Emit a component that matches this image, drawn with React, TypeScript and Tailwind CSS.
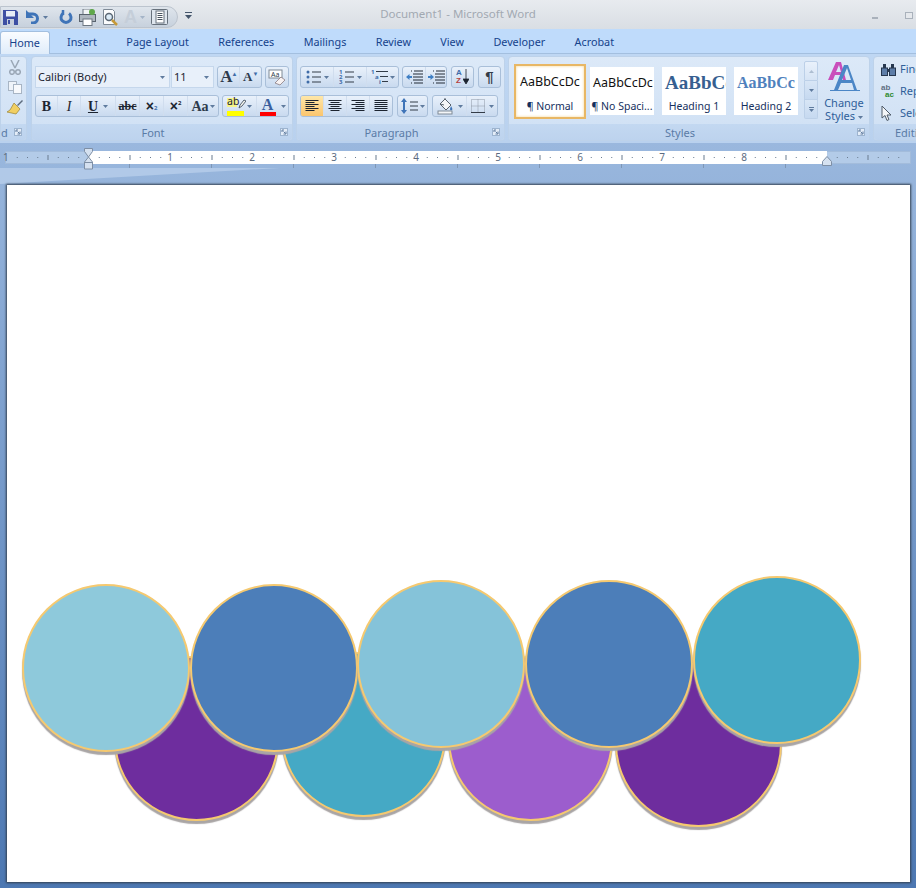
import type { ReactNode } from "react";

const strip = "flex h-[22px] items-center rounded-[3px] border border-[#a9bfd9] bg-gradient-to-b from-[#e9f1fb] to-[#c9daef]";

function Caret({ className = "" }: { className?: string }) {
  return (
    <svg width="5" height="3" viewBox="0 0 5 3" className={className}>
      <path d="M0 0h5L2.5 3z" fill="#5f7b9e" />
    </svg>
  );
}

function Launcher() {
  return (
    <svg width="8" height="8" viewBox="0 0 8 8" className="absolute right-[4px] bottom-[4px]">
      <rect x="0.500" y="0.500" width="7" height="7" fill="#e4edf8" stroke="#9db4cf" />
      <path d="M2 2h2M2 2v2M3.500 3.500l2 2M6 3.500V6H3.500" stroke="#5f7b9e" fill="none" />
    </svg>
  );
}

function Group({ label, width, children, launcher = true, rounded = "rounded-[4px]" }: { label: string; width: string; children: ReactNode; launcher?: boolean; rounded?: string }) {
  return (
    <div className={`relative flex h-[85px] shrink-0 flex-col overflow-hidden border border-[#bdd2ea] bg-gradient-to-b from-[#dce9f8] to-[#cfe0f4] ${width} ${rounded}`}>
      <div className="min-h-0 flex-1">{children}</div>
      <div className={`flex h-[16px] items-center justify-center bg-gradient-to-b from-[#c3d8f1] to-[#bdd3ee] text-[11px] leading-none text-[#5a7ba6] ${launcher ? "pr-[18px]" : ""}`}>{label}</div>
      {launcher && <Launcher />}
    </div>
  );
}

function Lines({ kind }: { kind: "left" | "center" | "right" | "justify" }) {
  const offset = kind === "center" ? 2 : kind === "right" ? 4 : 0;
  const short = kind === "justify" ? 13 : 9;
  return (
    <svg width="14" height="12" viewBox="0 0 14 12">
      {[0, 1, 2, 3, 4, 5].map((i) => (
        <rect key={i} x={i % 2 ? offset + 0.500 : 0.500} y={i * 2} width={i % 2 ? short : 13} height="1" fill="#1c2430" />
      ))}
    </svg>
  );
}

function Bullets() {
  return (
    <svg width="15" height="14" viewBox="0 0 15 14">
      {[2, 7, 12].map((y) => (
        <g key={y}>
          <circle cx="2" cy={y} r="1.500" fill="#3f6ca8" />
          <rect x="6" y={y - 0.500} width="9" height="1" fill="#333c48" />
        </g>
      ))}
    </svg>
  );
}

function Numbers() {
  return (
    <svg width="15" height="15" viewBox="0 0 15 15">
      {[["1", 4], ["2", 9], ["3", 14]].map(([n, y]) => (
        <g key={n}>
          <text x="0" y={y} fontSize="6" fontWeight="700" fill="#3f6ca8">{n}</text>
          <rect x="6" y={Number(y) - 2.500} width="9" height="1" fill="#333c48" />
        </g>
      ))}
    </svg>
  );
}

function Multi() {
  return (
    <svg width="18" height="16" viewBox="0 0 18 16">
      <text x="0" y="5" fontSize="6" fontWeight="700" fill="#3f6ca8">1</text>
      <rect x="5" y="2" width="12" height="1" fill="#333c48" />
      <text x="4" y="10" fontSize="6" fontWeight="700" fill="#3f6ca8">a</text>
      <rect x="9" y="7" width="8" height="1" fill="#333c48" />
      <text x="8" y="15" fontSize="6" fontWeight="700" fill="#3f6ca8">i</text>
      <rect x="11" y="12" width="6" height="1" fill="#333c48" />
    </svg>
  );
}

function Indent({ out }: { out?: boolean }) {
  return (
    <svg width="17" height="14" viewBox="0 0 17 14">
      {[1, 4, 7, 10, 13].map((y) => (
        <g key={y}>
          <rect x="8" y={y - 0.500} width="9" height="1" fill="#222b36" />
          <rect x={y === 1 || y === 13 ? 5 : 7} y={y - 0.500} width="1" height="1" fill="#222b36" />
        </g>
      ))}
      <path d={out ? "M0 7l3.500-3v2H6v2H3.500v2z" : "M6 7L2.500 4v2H0v2h2.500v2z"} fill="#3f7fc4" />
    </svg>
  );
}

function Save() {
  return (
    <svg width="15" height="15" viewBox="0 0 15 15">
      <path d="M0 0h13l2 2v13H0z" fill="#3d4fa3" />
      <rect x="3" y="1" width="9" height="5.500" fill="#e7edf6" />
      <rect x="4" y="9" width="7" height="6" fill="#c7cfdc" />
      <rect x="5" y="10" width="2" height="4" fill="#3d4fa3" />
    </svg>
  );
}

function Undo({ redo }: { redo?: boolean }) {
  return (
    <svg width="14" height="14" viewBox="0 0 14 14">
      {redo ? (
        <g fill="none" stroke="#3f74b8" strokeWidth="3">
          <path d="M4 3.500a5 5 0 1 0 6 0" />
          <path d="M4 0v5" strokeWidth="2.500" />
        </g>
      ) : (
        <g>
          <path d="M3 4h5a4.500 4.500 0 0 1 0 9H6" fill="none" stroke="#3f74b8" strokeWidth="3" />
          <path d="M1 0v8h8z" fill="#3f74b8" />
        </g>
      )}
    </svg>
  );
}

function Print() {
  return (
    <svg width="17" height="17" viewBox="0 0 17 17">
      <rect x="4" y="0" width="9" height="6" fill="#f3f5f7" stroke="#6d7781" />
      <rect x="0.500" y="5.500" width="16" height="7" fill="#aeb6bf" stroke="#59636e" />
      <rect x="4" y="10" width="9" height="6.500" fill="#fff" stroke="#6d7781" />
      <circle cx="13" cy="3" r="3" fill="#5fa84a" />
    </svg>
  );
}

function Preview() {
  return (
    <svg width="17" height="17" viewBox="0 0 17 17">
      <path d="M1.500.5h9l2 2v13h-11z" fill="#fbfcfd" stroke="#7f8a96" />
      <circle cx="7" cy="8" r="3.500" fill="#dcecf8" stroke="#5a6673" strokeWidth="1.500" />
      <path d="M10 11l5 5" stroke="#c79a39" strokeWidth="2.500" />
    </svg>
  );
}

function DocIcon() {
  return (
    <svg width="17" height="16" viewBox="0 0 17 16">
      <rect x="0.500" y="0.500" width="16" height="15" rx="1" fill="#dfe6ee" stroke="#67717c" />
      <rect x="5" y="2" width="8" height="12" fill="#fff" stroke="#67717c" />
      <path d="M6.500 4.500h5M6.500 6.500h5M6.500 8.500h5M6.500 10.500h5" stroke="#47525e" />
    </svg>
  );
}

function TitleBar() {
  return (
    <div className="relative flex h-[29px] items-start bg-gradient-to-b from-[#e8ebef] to-[#d9dee4]">
      <div className="mt-[6px] flex h-[22px] w-[178px] items-center rounded-r-[12px] border border-[#bcc4ce] bg-gradient-to-b from-[#dfe5ec] to-[#c7d1dd] pl-[2px]">
        <Save />
        <span className="ml-[7px] flex"><Undo /></span>
        <Caret className="ml-[4px]" />
        <span className="ml-[11px] flex"><Undo redo /></span>
        <span className="ml-[6px] flex"><Print /></span>
        <span className="ml-[6px] flex"><Preview /></span>
        <span className="ml-[5px] font-['Liberation_Sans',sans-serif] text-[18px] leading-none font-bold text-[#c5ced9]">A</span>
        <Caret className="ml-[3px] opacity-40" />
        <span className="ml-[6px] flex"><DocIcon /></span>
      </div>
      <svg width="7" height="8" viewBox="0 0 7 8" className="mt-[12px] ml-[7px]">
        <path d="M0 0h7v1H0zM0 3h7L3.500 7z" fill="#44556b" />
      </svg>
      <div className="absolute inset-x-0 top-[6px] text-center text-[11.500px] leading-[16px] text-[#a2a9b2]">Document1 - Microsoft Word</div>
      <div className="absolute top-[17px] left-[872px] h-[2px] w-[6px] bg-[#a9b1bb]" />
      <div className="absolute top-[12px] left-[905px] h-[7px] w-[8px] border border-[#a9b1bb] bg-[#e5e8ec]" />
    </div>
  );
}

const tabs = ["Insert", "Page Layout", "References", "Mailings", "Review", "View", "Developer", "Acrobat"];

function TabRow() {
  return (
    <div className="flex h-[25px] items-end border-b border-[#a3bfdf] bg-[#bfdbfb]">
      <div className="-mb-px flex h-[23px] w-[50px] items-center justify-center rounded-t-[3px] border border-b-0 border-[#a3bfdf] bg-gradient-to-b from-[#fafcff] to-[#dfecfa] pr-[1px] text-[10.800px] text-[#15428b]">Home</div>
      <div className="ml-[17px] flex h-[23px] gap-[29.400px] text-[10.800px] leading-[23px] text-[#15428b]">
        {tabs.map((t) => (
          <span key={t}>{t}</span>
        ))}
      </div>
    </div>
  );
}

function Cell({ children, className = "" }: { children: ReactNode; className?: string }) {
  return <div className={`flex h-full items-center justify-center border-r border-[#d0ddee] last:border-r-0 ${className}`}>{children}</div>;
}

const serif = "font-['Liberation_Serif',serif]";

function FontGroup() {
  return (
    <Group label="Font" width="w-[262px]">
      <div className="flex flex-col gap-[7px] pt-[9px] pl-[3px]">
        <div className="flex h-[22px] items-center">
          <div className="flex h-[22px] w-[135px] items-center justify-between border border-[#c5d7ec] bg-[#e8f0fa] pr-[4px] pl-[2px] text-[11px] text-[#1c2430]">
            Calibri (Body)
            <Caret />
          </div>
          <div className="ml-px flex h-[22px] w-[43px] items-center justify-between border border-[#c5d7ec] bg-[#e8f0fa] pr-[4px] pl-[2px] text-[11px] text-[#1c2430]">
            11
            <Caret />
          </div>
          <div className={`${strip} ml-[3px] w-[45px]`}>
            <Cell className={`w-[23px] ${serif} text-[17px] font-bold text-[#2e3b4c]`}>A<sup className="-ml-px text-[6px] text-[#3f6ca8]">▲</sup></Cell>
            <Cell className={`w-[21px] ${serif} text-[13px] font-bold text-[#2e3b4c]`}>A<sup className="text-[6px] text-[#3f6ca8]">▼</sup></Cell>
          </div>
          <div className={`${strip} ml-[3px] w-[24px] justify-center`}>
            <svg width="18" height="17" viewBox="0 0 18 17">
              <rect x="1" y="1" width="13" height="8" fill="#fff" stroke="#7f8a96" />
              <text x="3" y="8" fontSize="7" fill="#2e3b4c">Aa</text>
              <path d="M7 14l6-6 4 3-5 5z" fill="#f7f2f2" stroke="#7f6f72" strokeWidth="0.700" />
            </svg>
          </div>
        </div>
        <div className="flex h-[22px] items-center">
          <div className={`${strip} w-[184px] text-[#1c2430]`}>
            <Cell className={`w-[22px] ${serif} text-[14px] font-bold`}>B</Cell>
            <Cell className={`w-[23px] ${serif} text-[14px] italic`}>I</Cell>
            <Cell className="w-[35px] gap-[5px]"><span className={`${serif} text-[14px] font-bold underline`}>U</span><Caret /></Cell>
            <Cell className={`w-[24px] ${serif} text-[12px] font-bold line-through`}>abc</Cell>
            <Cell className="w-[24px] text-[12px] font-bold">
              <span className="font-['Liberation_Sans',sans-serif] text-[14px]">×</span><sub className="text-[6px] text-[#3f6ca8]">2</sub>
            </Cell>
            <Cell className="w-[24px] text-[12px] font-bold">
              <span className="font-['Liberation_Sans',sans-serif] text-[14px]">×</span><sup className="text-[6px]">2</sup>
            </Cell>
            <Cell className={`flex-1 gap-[1px] ${serif} text-[14px] font-bold text-[#2e3b4c]`}>Aa<Caret /></Cell>
          </div>
          <div className={`${strip} ml-[3px] w-[67px]`}>
            <Cell className="w-[34px] gap-[3px]">
              <div className="relative h-[19px] w-[17px]">
                <div className="absolute top-[1px] left-0 h-[9px] w-[10px] bg-[#f6f58a]" />
                <span className="absolute top-[-3px] left-0 text-[10.500px] text-[#1c2430]">ab</span>
                <svg width="8" height="10" viewBox="0 0 8 10" className="absolute top-[2px] right-[-2px]">
                  <path d="M1 9l1-3 4-5 2 1-4 5z" fill="#f6f6ef" stroke="#53606f" />
                </svg>
                <div className="absolute right-0 bottom-0 left-0 h-[5px] bg-[#ffff00]" />
              </div>
              <Caret />
            </Cell>
            <Cell className="flex-1 gap-[5px]">
              <div className="flex h-[19px] w-[16px] flex-col items-center justify-end">
                <span className={`${serif} text-[16px] leading-[14px] font-bold text-[#3a5f9e]`}>A</span>
                <div className="h-[4px] w-full bg-[#ff0000]" />
              </div>
              <Caret />
            </Cell>
          </div>
        </div>
      </div>
    </Group>
  );
}

function ParagraphGroup() {
  return (
    <Group label="Paragraph" width="w-[209px]">
      <div className="flex flex-col gap-[7px] pt-[9px] pl-[3px]">
        <div className="flex">
          <div className={`${strip} w-[99px]`}>
            <Cell className="w-[33px] gap-[3px]"><Bullets /><Caret /></Cell>
            <Cell className="w-[33px] gap-[3px]"><Numbers /><Caret /></Cell>
            <Cell className="flex-1 gap-[1px]"><Multi /><Caret /></Cell>
          </div>
          <div className={`${strip} ml-[3px] w-[45px]`}>
            <Cell className="w-[23px]"><Indent out /></Cell>
            <Cell className="flex-1"><Indent /></Cell>
          </div>
          <div className={`${strip} ml-[4px] w-[23px] justify-center gap-[1px]`}>
            <div className="flex flex-col font-['Liberation_Sans',sans-serif] text-[8px] leading-[8px] font-bold">
              <span className="text-[#3f6ca8]">A</span>
              <span className="text-[#b5403f]">Z</span>
            </div>
            <svg width="6" height="16" viewBox="0 0 6 16"><path d="M3 0v12M0 10l3 5 3-5z" fill="#1c2430" stroke="#1c2430" strokeWidth="0.800" /></svg>
          </div>
          <div className={`${strip} ml-[4px] w-[23px] justify-center font-['Liberation_Sans',sans-serif] text-[15px] font-bold text-[#333c48]`}>¶</div>
        </div>
        <div className="flex">
          <div className={`${strip} w-[93px]`}>
            <Cell className="w-[23px] rounded-l-[2px] bg-gradient-to-b from-[#fee7a8] to-[#fbc56d]"><Lines kind="left" /></Cell>
            <Cell className="w-[23px]"><Lines kind="center" /></Cell>
            <Cell className="w-[23px]"><Lines kind="right" /></Cell>
            <Cell className="flex-1"><Lines kind="justify" /></Cell>
          </div>
          <div className={`${strip} ml-[4px] w-[31px] justify-center gap-[2px]`}>
            <svg width="17" height="16" viewBox="0 0 17 16">
              <path d="M3 0l-3 4h2v8H0l3 4 3-4H4V4h2z" fill="#3f74b8" />
              <path d="M9 4h8M9 8h8M9 12h8" stroke="#333c48" />
            </svg>
            <Caret />
          </div>
          <div className={`${strip} ml-[4px] w-[66px]`}>
            <Cell className="w-[34px] gap-[4px]">
              <svg width="17" height="17" viewBox="0 0 17 17">
                <path d="M8 1l6 6-5 5-6-6z" fill="#f4f6f8" stroke="#59636e" />
                <path d="M8 1V0M3 6l4 1" stroke="#59636e" />
                <path d="M14 8c1 2 2 3 1 4s-2 0-2-1z" fill="#3f74b8" />
                <rect x="1" y="13" width="14" height="3" fill="#f4f6f8" stroke="#7f8a96" />
              </svg>
              <Caret />
            </Cell>
            <Cell className="flex-1 gap-[4px]">
              <svg width="14" height="14" viewBox="0 0 14 14">
                <path d="M.5.5h13v13H.5zM7 .5v13M.5 7h13" fill="none" stroke="#8c97a5" strokeDasharray="1 1" />
                <path d="M0 13.500h14" stroke="#333c48" />
              </svg>
              <Caret />
            </Cell>
          </div>
        </div>
      </div>
    </Group>
  );
}

function StyleBox({ sample, name, active, sampleClass = "text-[12.500px] text-[#111]", width }: { sample: string; name: string; active?: boolean; sampleClass?: string; width: string }) {
  return (
    <div className={`flex shrink-0 flex-col items-center overflow-hidden bg-white ${width} ${active ? "h-[55px] border-2 border-[#e8b765] shadow-[inset_0_0_3px_#f7d48c]" : "h-[48px]"}`}>
      <div className={`flex w-full shrink-0 items-center justify-center overflow-hidden whitespace-nowrap ${active ? "h-[33px]" : "h-[32px]"} ${sampleClass}`}>
        <span className={`block w-full overflow-hidden ${active ? "pl-[4px]" : "pl-[3px]"}`}>{sample}</span>
      </div>
      <div className="text-[10.500px] leading-[14px] whitespace-nowrap text-[#15305e]">{name}</div>
    </div>
  );
}

function StylesGroup() {
  return (
    <Group label="Styles" width="w-[362px]">
      <div className="flex items-start pl-[5px]">
        <div className="mt-[7px]"><StyleBox active sample="AaBbCcDc" name="¶ Normal" width="w-[72px]" /></div>
        <div className="mt-[10px] ml-[4px]"><StyleBox sample="AaBbCcDc" name="¶ No Spaci..." width="w-[64px]" /></div>
        <div className="mt-[10px] ml-[8px]"><StyleBox sample="AaBbCc" name="Heading 1" width="w-[64px]" sampleClass={`${serif} text-[19px] font-bold text-[#365f91]`} /></div>
        <div className="mt-[10px] ml-[8px]"><StyleBox sample="AaBbCc" name="Heading 2" width="w-[64px]" sampleClass={`${serif} text-[16px] font-bold text-[#4f81bd]`} /></div>
        <div className="mt-[4px] ml-[6px] flex w-[14px] flex-col">
          <div className="flex h-[20px] items-center justify-center rounded-t-[2px] border border-[#bcd0e8] bg-gradient-to-b from-[#e9f1fb] to-[#d6e4f5]"><svg width="5" height="3" viewBox="0 0 5 3" className="opacity-50"><path d="M0 3h5L2.500 0z" fill="#7d93ad" /></svg></div>
          <div className="flex h-[19px] items-center justify-center border border-t-0 border-[#bcd0e8] bg-gradient-to-b from-[#d8e6f6] to-[#c6d9f0]"><Caret /></div>
          <div className="flex h-[19px] flex-col items-center justify-center gap-[1px] rounded-b-[2px] border border-t-0 border-[#bcd0e8] bg-gradient-to-b from-[#d8e6f6] to-[#c6d9f0]"><div className="h-px w-[5px] bg-[#5f7b9e]" /><Caret /></div>
        </div>
        <div className="ml-[2px] flex w-[48px] flex-col items-center pt-[5px]">
          <svg width="32" height="30" viewBox="0 0 32 30">
            <path d="M0 18L8 0h5l5 18h-3l-1.500-5H7l-2 5zM8 10h5l-2-7z" fill="#c94ebb" fillRule="evenodd" />
            <path d="M6 28L16 3h4l9 25h-3l-2-7H13l-3 7zM14 18h9l-4-12z" fill="#4b86c6" fillRule="evenodd" />
            <path d="M2 28.500h30" stroke="#4b86c6" />
          </svg>
          <div className="mt-[4px] text-center text-[11px] leading-[13px] text-[#2f5f9a]">Change<br />Styles <Caret className="inline align-middle" /></div>
        </div>
      </div>
    </Group>
  );
}

function EditingGroup() {
  return (
    <Group label="Editing" width="w-[80px]" launcher={false} rounded="rounded-l-[4px]">
      <div className="flex flex-col gap-[4px] pt-[3px] pl-[7px] text-[11px] leading-[18px] text-[#2f5f9a]">
        <div className="flex items-center gap-[4px]">
          <svg width="15" height="13" viewBox="0 0 15 13">
            <rect x="0.500" y="5" width="6" height="7.500" fill="#5d7da8" stroke="#26374f" />
            <rect x="8.500" y="5" width="6" height="7.500" fill="#5d7da8" stroke="#26374f" />
            <rect x="2" y="1" width="3" height="4" fill="#26374f" />
            <rect x="10" y="1" width="3" height="4" fill="#26374f" />
            <rect x="6" y="6" width="3" height="3" fill="#26374f" />
          </svg>
          Find
        </div>
        <div className="flex items-center gap-[4px]">
          <div className="w-[15px] font-['Liberation_Sans',sans-serif] text-[8px] leading-[7px] font-bold">
            <div className="text-[#5f6f83]">ab</div>
            <div className="pl-[4px] text-[#2f8a2f]">ac</div>
          </div>
          Replace
        </div>
        <div className="flex items-center gap-[6px]">
          <svg width="13" height="15" viewBox="0 0 13 15"><path d="M1 0v12l3-2.500 2 5 2-1-2-4.500h4z" fill="#f4f6f8" stroke="#4f5b69" /></svg>
          Select
        </div>
      </div>
    </Group>
  );
}

function ClipboardGroup() {
  return (
    <Group label="d" width="w-[27px]" rounded="rounded-r-[4px]">
      <div className="flex flex-col items-center gap-[6px] pt-[3px] pl-[2px]">
        <svg width="12" height="15" viewBox="0 0 12 15">
          <path d="M2 0l4 8M10 0L6 8" stroke="#9aa7b6" strokeWidth="1.500" />
          <circle cx="3" cy="12" r="2.300" fill="none" stroke="#9aa7b6" strokeWidth="1.500" />
          <circle cx="9" cy="12" r="2.300" fill="none" stroke="#9aa7b6" strokeWidth="1.500" />
        </svg>
        <svg width="14" height="13" viewBox="0 0 14 13">
          <rect x="0.500" y="0.500" width="8" height="9" fill="#eef3f9" stroke="#a8b5c4" />
          <rect x="5.500" y="3.500" width="8" height="9" fill="#f7f9fc" stroke="#a8b5c4" />
        </svg>
        <svg width="16" height="15" viewBox="0 0 16 15">
          <path d="M10 5l5-5 1 1-5 5z" fill="#5c6b7d" />
          <path d="M7 3l6 6-4 5-9-2 3-2z" fill="#f1cf62" stroke="#9a8131" strokeWidth="0.700" />
        </svg>
      </div>
    </Group>
  );
}

function Ribbon() {
  return (
    <div className="flex h-[89px] gap-[3px] overflow-hidden bg-gradient-to-b from-[#bfd7f3] to-[#b9d1ee] pt-[2px]">
      <ClipboardGroup />
      <div className="ml-[1px]"><FontGroup /></div>
      <ParagraphGroup />
      <StylesGroup />
      <EditingGroup />
    </div>
  );
}

function Ruler() {
  const inches = [-1, 1, 2, 3, 4, 5, 6, 7, 8];
  const eighths = Array.from({ length: 90 }, (_, i) => i);
  return (
    <svg width="916" height="28" viewBox="0 0 916 28" className="block">
      <rect x="5.500" y="8.500" width="905" height="12" fill="#b3cbe8" stroke="#a3bcdb" />
      <rect x="88" y="8" width="739" height="13" fill="#fff" />
      {eighths.map((i) => {
        const x = 6.500 + (i * 82) / 8;
        if (i % 8 === 0 || x > 905) return null;
        return i % 4 === 0 ? (
          <rect key={i} x={x} y="12" width="1" height="5" fill="#6b7c90" />
        ) : (
          <rect key={i} x={x} y="14" width="1" height="1" fill="#6b7c90" />
        );
      })}
      {[129, 211, 293, 375, 457, 539, 621, 703, 785].map((x) => (
        <rect key={x} x={x} y="21" width="1" height="4" fill="#7f97b6" />
      ))}
      {inches.map((n) => (
        <text key={n} x={n === -1 ? 3 : 88 + n * 82} y="18" fontSize="10" fill="#5b6b80" textAnchor={n === -1 ? "start" : "middle"}>
          {Math.abs(n)}
        </text>
      ))}
      <path d="M84.500 5.500h8v3l-4 5.500 4 5v7h-8v-7l4-5-4-5.500z" fill="#d5e1f0" stroke="#7e8fa5" />
      <path d="M84.500 19.500h8" stroke="#7e8fa5" />
      <path d="M822.500 22.500v-4l4.500-5 4.500 5v4z" fill="#d5e1f0" stroke="#7e8fa5" />
    </svg>
  );
}

const circles = [
  "left-[107px] top-[471px] h-[165px] w-[165px] bg-[#6e2d9e]",
  "left-[274px] top-[467px] h-[165px] w-[165px] bg-[#45a9c5]",
  "left-[441px] top-[471px] h-[165px] w-[165px] bg-[#9c5dcd]",
  "left-[608px] top-[475px] h-[167px] w-[167px] bg-[#6e2d9e]",
  "left-[15px] top-[399px] h-[168px] w-[168px] bg-[#8ec9db]",
  "left-[183px] top-[399px] h-[168px] w-[168px] bg-[#4c7eb9]",
  "left-[350px] top-[395px] h-[168px] w-[168px] bg-[#85c3d9]",
  "left-[518px] top-[395px] h-[168px] w-[168px] bg-[#4c7eb9]",
  "left-[686px] top-[391px] h-[168px] w-[168px] bg-[#45a9c5]",
];

export default function App() {
  return (
    <div className="h-[888px] w-[916px] overflow-hidden bg-gradient-to-b from-[#a9c4e6] to-[#4d78b2] font-['Noto_Sans',sans-serif]">
      <TitleBar />
      <TabRow />
      <Ribbon />
      <div className="relative h-[42px]">
        <div className="absolute top-[25px] left-0 h-0 w-0 border-t-[16px] border-r-[280px] border-t-[#bcd2ec] border-r-transparent opacity-70" />
        <div className="relative"><Ruler /></div>
      </div>
      <div className="relative mx-[7px] h-[697px] w-[903px] bg-white shadow-[0_0_2px_1px_#33404f]">
        {circles.map((c) => (
          <div key={c} className={`absolute rounded-full border-[2.500px] border-[#f5c970] shadow-[0_3px_1px_#a9a5a5] ${c}`} />
        ))}
      </div>
    </div>
  );
}
